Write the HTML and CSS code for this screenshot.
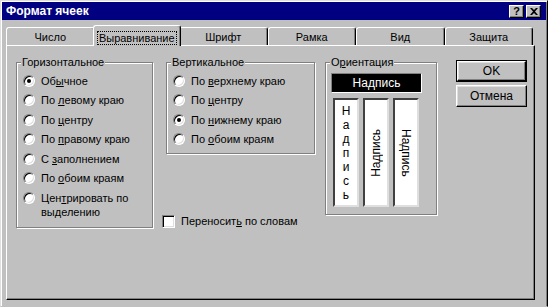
FILE: index.html
```html
<!DOCTYPE html>
<html lang="ru">
<head>
  <meta charset="UTF-8">
  <title>Формат ячеек</title>
  <link rel="stylesheet" href="styles.css">
</head>
<body>
  <div class="window">
    <div class="titlebar">
      <span class="title">Формат ячеек</span>
      <div class="caption-buttons">
        <span class="cap-btn help">?</span>
        <span class="cap-btn">
          <svg width="8" height="7" viewBox="0 0 8 7">
            <path d="M0 0h2l2 2 2-2h2L5 3.5 8 7H6L4 5 2 7H0l3-3.5z" fill="#000"/>
          </svg>
        </span>
      </div>
    </div>

    <div class="tabs">
      <div class="tab">Число</div>
      <div class="tab active"><span class="focus">Выравнивание</span></div>
      <div class="tab">Шрифт</div>
      <div class="tab">Рамка</div>
      <div class="tab">Вид</div>
      <div class="tab">Защита</div>
    </div>

    <div class="panel">
      <!-- horizontal alignment -->
      <div class="group horiz">
        <div class="legend">Горизонтальное</div>
        <div class="option"><span class="radio checked"></span><span>Об<u>ы</u>чное</span></div>
        <div class="option"><span class="radio"></span><span>По <u>л</u>евому краю</span></div>
        <div class="option"><span class="radio"></span><span>По <u>ц</u>ентру</span></div>
        <div class="option"><span class="radio"></span><span>По <u>п</u>равому краю</span></div>
        <div class="option"><span class="radio"></span><span>С <u>з</u>аполнением</span></div>
        <div class="option"><span class="radio"></span><span>По <u>о</u>боим краям</span></div>
        <div class="option"><span class="radio"></span><span>Цен<u>т</u>рировать по<br>выделению</span></div>
      </div>

      <div class="middle">
        <!-- vertical alignment -->
        <div class="group vert">
          <div class="legend">Вертикальное</div>
          <div class="option"><span class="radio"></span><span>По <u>в</u>ерхнему краю</span></div>
          <div class="option"><span class="radio"></span><span>По <u>ц</u>ентру</span></div>
          <div class="option"><span class="radio checked"></span><span>По <u>н</u>ижнему краю</span></div>
          <div class="option"><span class="radio"></span><span>По <u>о</u>боим краям</span></div>
        </div>
        <div class="check-row"><span class="checkbox"></span><span>Переносит<u>ь</u> по словам</span></div>
      </div>

      <!-- orientation -->
      <div class="group orient">
        <div class="legend">О<u>р</u>иентация</div>
        <div class="sample-h">Надпись</div>
        <div class="samples">
          <div class="sample stacked">
            <span>Н</span><span>а</span><span>д</span><span>п</span><span>и</span><span>с</span><span>ь</span>
          </div>
          <div class="sample"><span class="up">Надпись</span></div>
          <div class="sample"><span class="down">Надпись</span></div>
        </div>
      </div>

      <div class="buttons">
        <div class="btn default">OK</div>
        <div class="btn">Отмена</div>
      </div>
    </div>
  </div>
</body>
</html>
```

FILE: styles.css
```css
body {
  margin: 0;
  background: #c0c0c0;
  font-family: 'Liberation Sans', Arial, sans-serif;
  font-size: 11px;
  color: #000;
  overflow: hidden;
}

.window {
  box-sizing: border-box;
  width: 548px;
  height: 307px;
  padding: 1px 1px 0 1px;
  border: 1px solid;
  border-color: #dfdfdf #000 transparent #dfdfdf;
  box-shadow: inset 1px 1px #fff, inset -1px 0 #808080;
  background: #c0c0c0;
}

.titlebar {
  height: 18px;
  background: #000080;
  display: flex;
  align-items: center;
  justify-content: space-between;
  padding: 0 5px 0 4px;
}

.title {
  color: #fff;
  font-weight: bold;
  font-size: 12px;
}

.caption-buttons {
  display: flex;
  gap: 2px;
}

.cap-btn {
  box-sizing: border-box;
  width: 15px;
  height: 13px;
  display: flex;
  align-items: center;
  justify-content: center;
  background: #c0c0c0;
  border: 1px solid;
  border-color: #fff #000 #000 #fff;
  box-shadow: inset -1px -1px #808080;
}

.cap-btn.help {
  font-weight: bold;
  font-size: 11px;
  line-height: 11px;
}

/* tabs */
.tabs {
  display: flex;
  align-items: flex-end;
  height: 20px;
  width: 527px;
  margin: 5px 0 0 4px;
}

.tab {
  flex: 1;
  box-sizing: border-box;
  height: 18px;
  padding-top: 3px;
  line-height: 13px;
  text-align: center;
  background: #c0c0c0;
  border-top: 1px solid #fff;
  border-left: 1px solid #fff;
  border-right: 1px solid #000;
  border-radius: 3px 3px 0 0;
  box-shadow: inset -1px 0 #808080;
}

.tab.active {
  height: 21px;
  margin: 0 -2px -1px;
  padding-top: 5px;
  position: relative;
  z-index: 1;
}

.focus {
  display: inline-block;
  line-height: 12px;
  padding: 0 1px;
  border: 1px dotted #000;
}

/* panel */
.panel {
  box-sizing: border-box;
  width: 529px;
  height: 255px;
  margin-left: 4px;
  padding: 16px 0 0 9px;
  border: 1px solid;
  border-color: #fff #000 #000 #fff;
  box-shadow: inset -1px -1px #808080;
  display: flex;
  align-items: flex-start;
}

.group {
  box-sizing: border-box;
  border: 1px solid #808080;
  box-shadow: inset 1px 1px #fff, 1px 1px #fff;
  padding-left: 6px;
}

.legend {
  width: fit-content;
  margin: -7px 0 0 -2px;
  padding: 0 1px;
  line-height: 13px;
  background: #c0c0c0;
}

.horiz {
  width: 137px;
  height: 166px;
}

.option {
  display: flex;
  align-items: flex-start;
  gap: 6px;
  padding: 2.75px 0;
  line-height: 14px;
}

.legend + .option {
  margin-top: 2px;
}

.radio {
  flex: none;
  position: relative;
  box-sizing: border-box;
  width: 12px;
  height: 12px;
  margin-top: 1px;
  border-radius: 50%;
  background: #fff;
  border: 1px solid;
  border-color: #808080 #fff #fff #808080;
  box-shadow: inset 1px 1px #000, inset -1px -1px #dfdfdf;
}

.radio.checked::after {
  content: '';
  position: absolute;
  left: 3px;
  top: 3px;
  width: 4px;
  height: 4px;
  border-radius: 50%;
  background: #000;
}

.middle {
  display: flex;
  flex-direction: column;
  margin-left: 9px;
  width: 153px;
}

.vert {
  margin-left: 4px;
  width: 149px;
  height: 92px;
}

.check-row {
  display: flex;
  align-items: center;
  gap: 6px;
  margin-top: 61px;
  line-height: 13px;
}

.checkbox {
  box-sizing: border-box;
  width: 13px;
  height: 13px;
  background: #fff;
  border: 1px solid;
  border-color: #808080 #fff #fff #808080;
  box-shadow: inset 1px 1px #000, inset -1px -1px #dfdfdf;
}

/* orientation */
.orient {
  margin-left: 10px;
  width: 112px;
  height: 153px;
}

.sample-h {
  box-sizing: border-box;
  width: 91px;
  height: 20px;
  margin: 4px 0 0 -1px;
  background: #000;
  color: #fff;
  font-size: 12px;
  line-height: 18px;
  text-align: center;
  border: 1px solid;
  border-color: #808080 #fff #fff #808080;
}

.samples {
  display: flex;
  gap: 4px;
  margin: 5px 0 0 1px;
}

.sample {
  box-sizing: border-box;
  width: 26px;
  height: 109px;
  background: #fff;
  border: 2px solid;
  border-color: #404040 #dfdfdf #dfdfdf #404040;
  display: flex;
  align-items: center;
  justify-content: center;
  font-size: 12px;
}

.sample.stacked {
  flex-direction: column;
  justify-content: flex-start;
  padding-top: 4px;
  line-height: 14px;
}

.up {
  writing-mode: vertical-rl;
  transform: rotate(180deg);
}

.down {
  writing-mode: vertical-rl;
}

/* buttons */
.buttons {
  display: flex;
  flex-direction: column;
  gap: 3px;
  margin: -2px 0 0 19px;
}

.btn {
  box-sizing: border-box;
  width: 71px;
  height: 22px;
  line-height: 20px;
  text-align: center;
  font-size: 12px;
  border: 1px solid;
  border-color: #fff #000 #000 #fff;
  box-shadow: inset -1px -1px #808080, inset 1px 1px #dfdfdf;
}

.btn.default {
  width: 69px;
  height: 20px;
  margin: 1px;
  line-height: 18px;
  box-shadow: 0 0 0 1px #000, inset -1px -1px #808080, inset 1px 1px #dfdfdf;
}
```
